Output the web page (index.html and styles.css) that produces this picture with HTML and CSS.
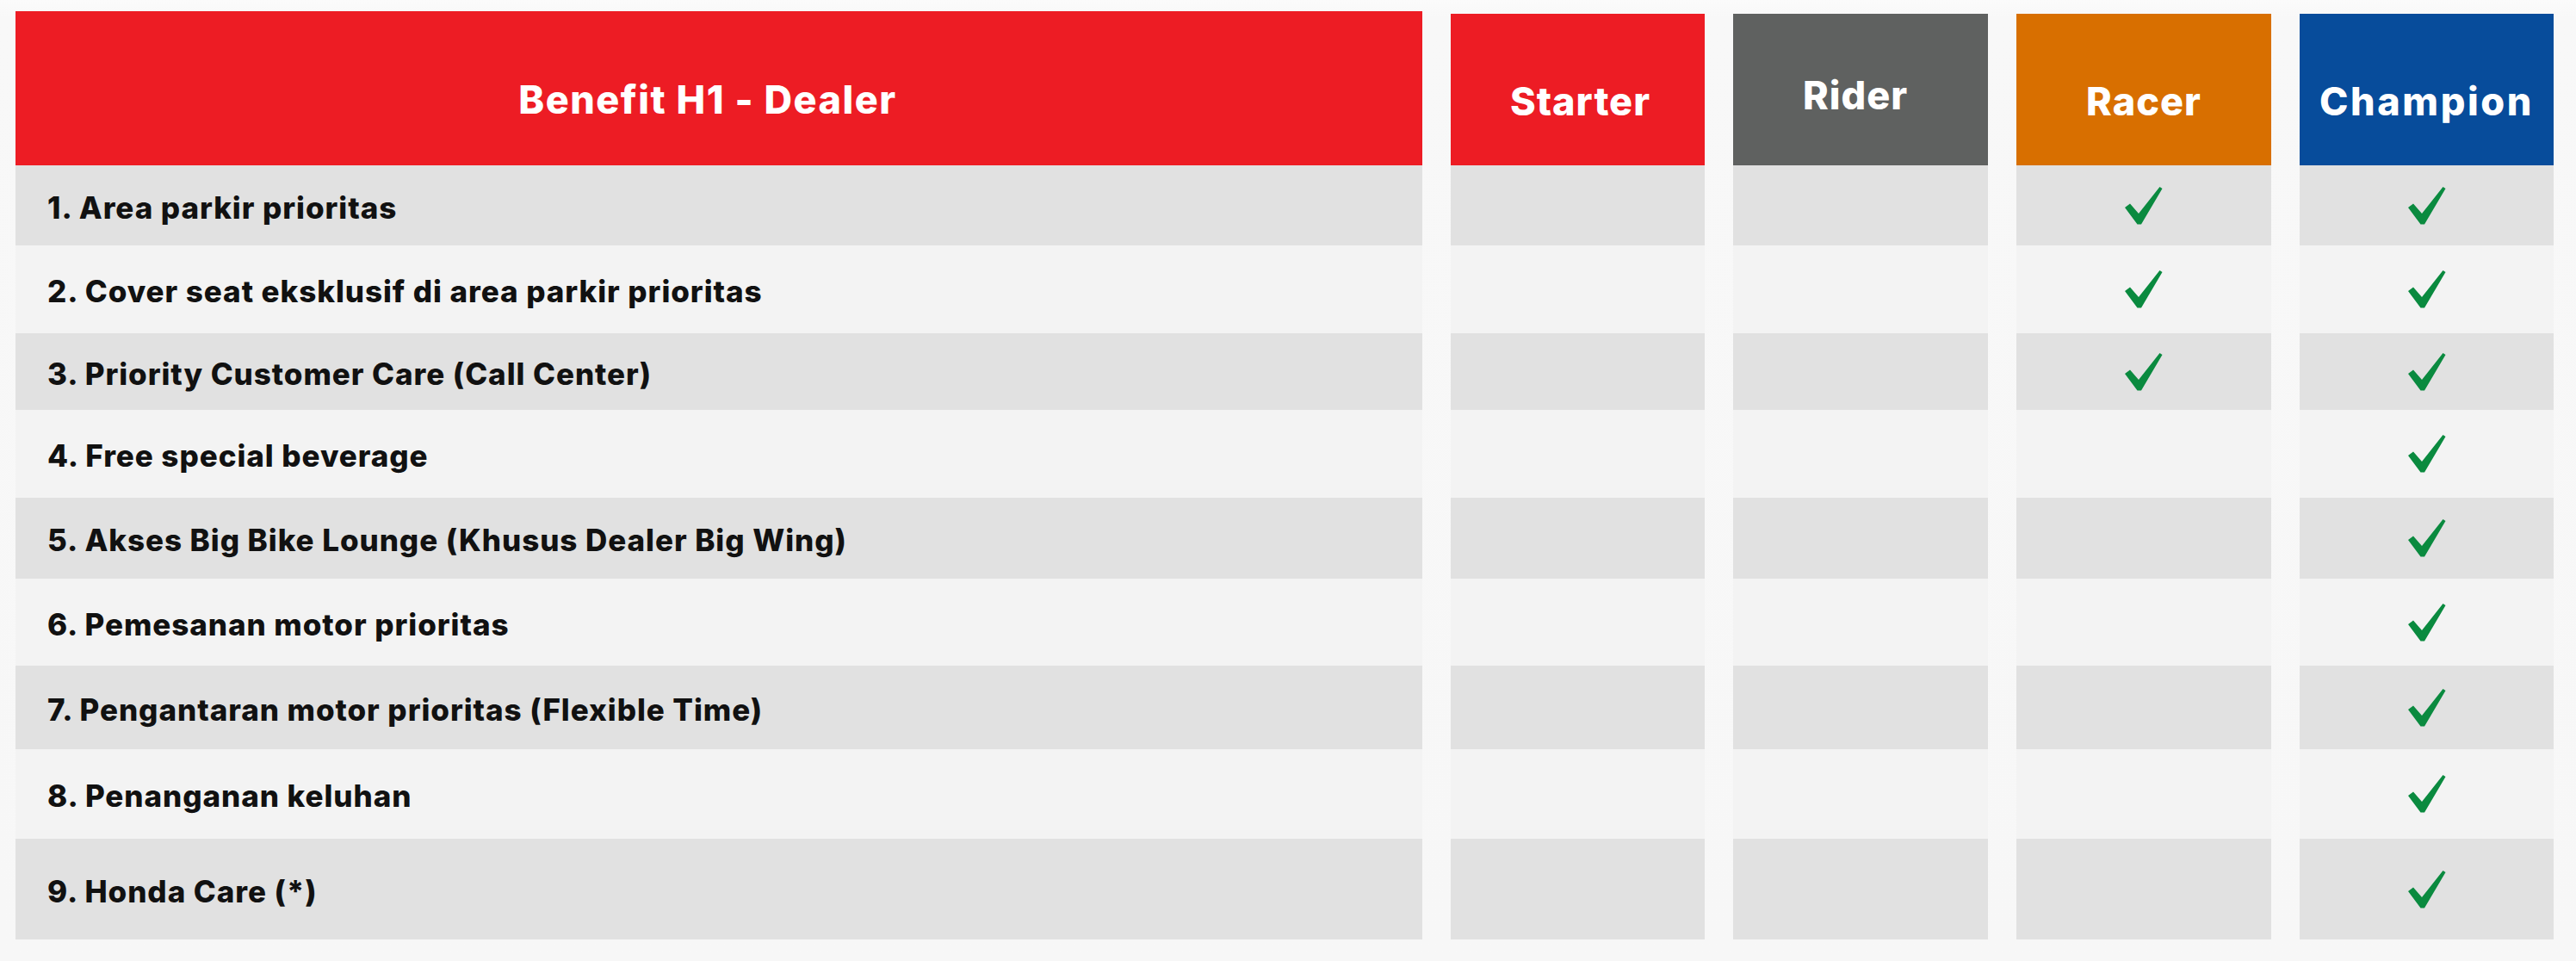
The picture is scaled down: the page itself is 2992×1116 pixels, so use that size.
FILE: index.html
```html
<!DOCTYPE html>
<html lang="id">
<head>
<meta charset="utf-8">
<title>Benefit H1 - Dealer</title>
<link rel="stylesheet" href="styles.css">
</head>
<body>
<svg width="0" height="0" class="defs" aria-hidden="true">
  <defs>
    <symbol id="check" viewBox="0 0 44 44">
      <path d="M0 24 L6 19.5 L16 31 L40.5 0 L43.5 2 L19 43.5 L14.5 43.5 Z"/>
    </symbol>
  </defs>
</svg>
<div class="table">
  <div class="row">
    <div class="head head-main">Benefit H1 - Dealer</div>
    <div class="head head-tier starter">Starter</div>
    <div class="head head-tier rider">Rider</div>
    <div class="head head-tier racer">Racer</div>
    <div class="head head-tier champion">Champion</div>
  </div>

  <div class="row dark">
    <div class="cell label">1. Area parkir prioritas</div>
    <div class="cell"></div><div class="cell"></div>
    <div class="cell"><svg class="ck"><use href="#check"/></svg></div>
    <div class="cell"><svg class="ck"><use href="#check"/></svg></div>
  </div>
  <div class="row light">
    <div class="cell label">2. Cover seat eksklusif di area parkir prioritas</div>
    <div class="cell"></div><div class="cell"></div>
    <div class="cell"><svg class="ck"><use href="#check"/></svg></div>
    <div class="cell"><svg class="ck"><use href="#check"/></svg></div>
  </div>
  <div class="row dark">
    <div class="cell label">3. Priority Customer Care (Call Center)</div>
    <div class="cell"></div><div class="cell"></div>
    <div class="cell"><svg class="ck"><use href="#check"/></svg></div>
    <div class="cell"><svg class="ck"><use href="#check"/></svg></div>
  </div>
  <div class="row light">
    <div class="cell label">4. Free special beverage</div>
    <div class="cell"></div><div class="cell"></div><div class="cell"></div>
    <div class="cell"><svg class="ck"><use href="#check"/></svg></div>
  </div>
  <div class="row dark">
    <div class="cell label">5. Akses Big Bike Lounge (Khusus Dealer Big Wing)</div>
    <div class="cell"></div><div class="cell"></div><div class="cell"></div>
    <div class="cell"><svg class="ck"><use href="#check"/></svg></div>
  </div>
  <div class="row light">
    <div class="cell label">6. Pemesanan motor prioritas</div>
    <div class="cell"></div><div class="cell"></div><div class="cell"></div>
    <div class="cell"><svg class="ck"><use href="#check"/></svg></div>
  </div>
  <div class="row dark">
    <div class="cell label">7. Pengantaran motor prioritas (Flexible Time)</div>
    <div class="cell"></div><div class="cell"></div><div class="cell"></div>
    <div class="cell"><svg class="ck"><use href="#check"/></svg></div>
  </div>
  <div class="row light">
    <div class="cell label">8. Penanganan keluhan</div>
    <div class="cell"></div><div class="cell"></div><div class="cell"></div>
    <div class="cell"><svg class="ck"><use href="#check"/></svg></div>
  </div>
  <div class="row dark">
    <div class="cell label">9. Honda Care (*)</div>
    <div class="cell"></div><div class="cell"></div><div class="cell"></div>
    <div class="cell"><svg class="ck"><use href="#check"/></svg></div>
  </div>
</div>
</body>
</html>
```

FILE: styles.css
```css
html, body {
  margin: 0;
  padding: 0;
}
body {
  background: linear-gradient(180deg, #fbfbfb 0px, #f8f8f8 20px, #f7f7f7 100%);
  width: 2992px;
  height: 1116px;
  overflow: hidden;
  font-family: Inter, "Noto Sans", "DejaVu Sans", sans-serif;
}
.defs {
  position: absolute;
}
.table {
  display: grid;
  grid-template-columns: 1634px 295px 296px 296px 295px;
  column-gap: 33px;
  grid-template-rows: 179px 93px 102px 89px 102px 94px 101px 97px 104px 117px;
  padding: 13px 0 0 18px;
}
.row {
  display: contents;
}
.head {
  color: #ffffff;
  font-weight: 800;
  font-size: 45px;
  display: flex;
  align-items: center;
  justify-content: center;
  padding-top: 26px;
  box-sizing: border-box;
  letter-spacing: 1.5px;
}
.head-main {
  background: #ed1c24;
  padding-right: 26px;
}
.head-tier {
  margin-top: 3px;
  letter-spacing: 1px;
}
.starter { background: #ed1c24; padding-left: 6px; }
.rider { background: #5f6160; padding-top: 12px; padding-right: 12px; }
.racer { background: #d86f00; }
.champion { background: #074c9b; letter-spacing: 2.6px; }

.cell {
  display: flex;
  align-items: center;
  justify-content: center;
}
.dark .cell { background: #e1e1e1; }
.light .cell { background: #f3f3f3; }
.label {
  justify-content: flex-start;
  padding-left: 37px;
  padding-top: 4px;
  box-sizing: border-box;
  font-size: 35px;
  font-weight: 800;
  color: #111111;
  letter-spacing: 0.95px;
}
.ck {
  width: 44px;
  height: 44px;
  fill: #0a8a3f;
}
```
